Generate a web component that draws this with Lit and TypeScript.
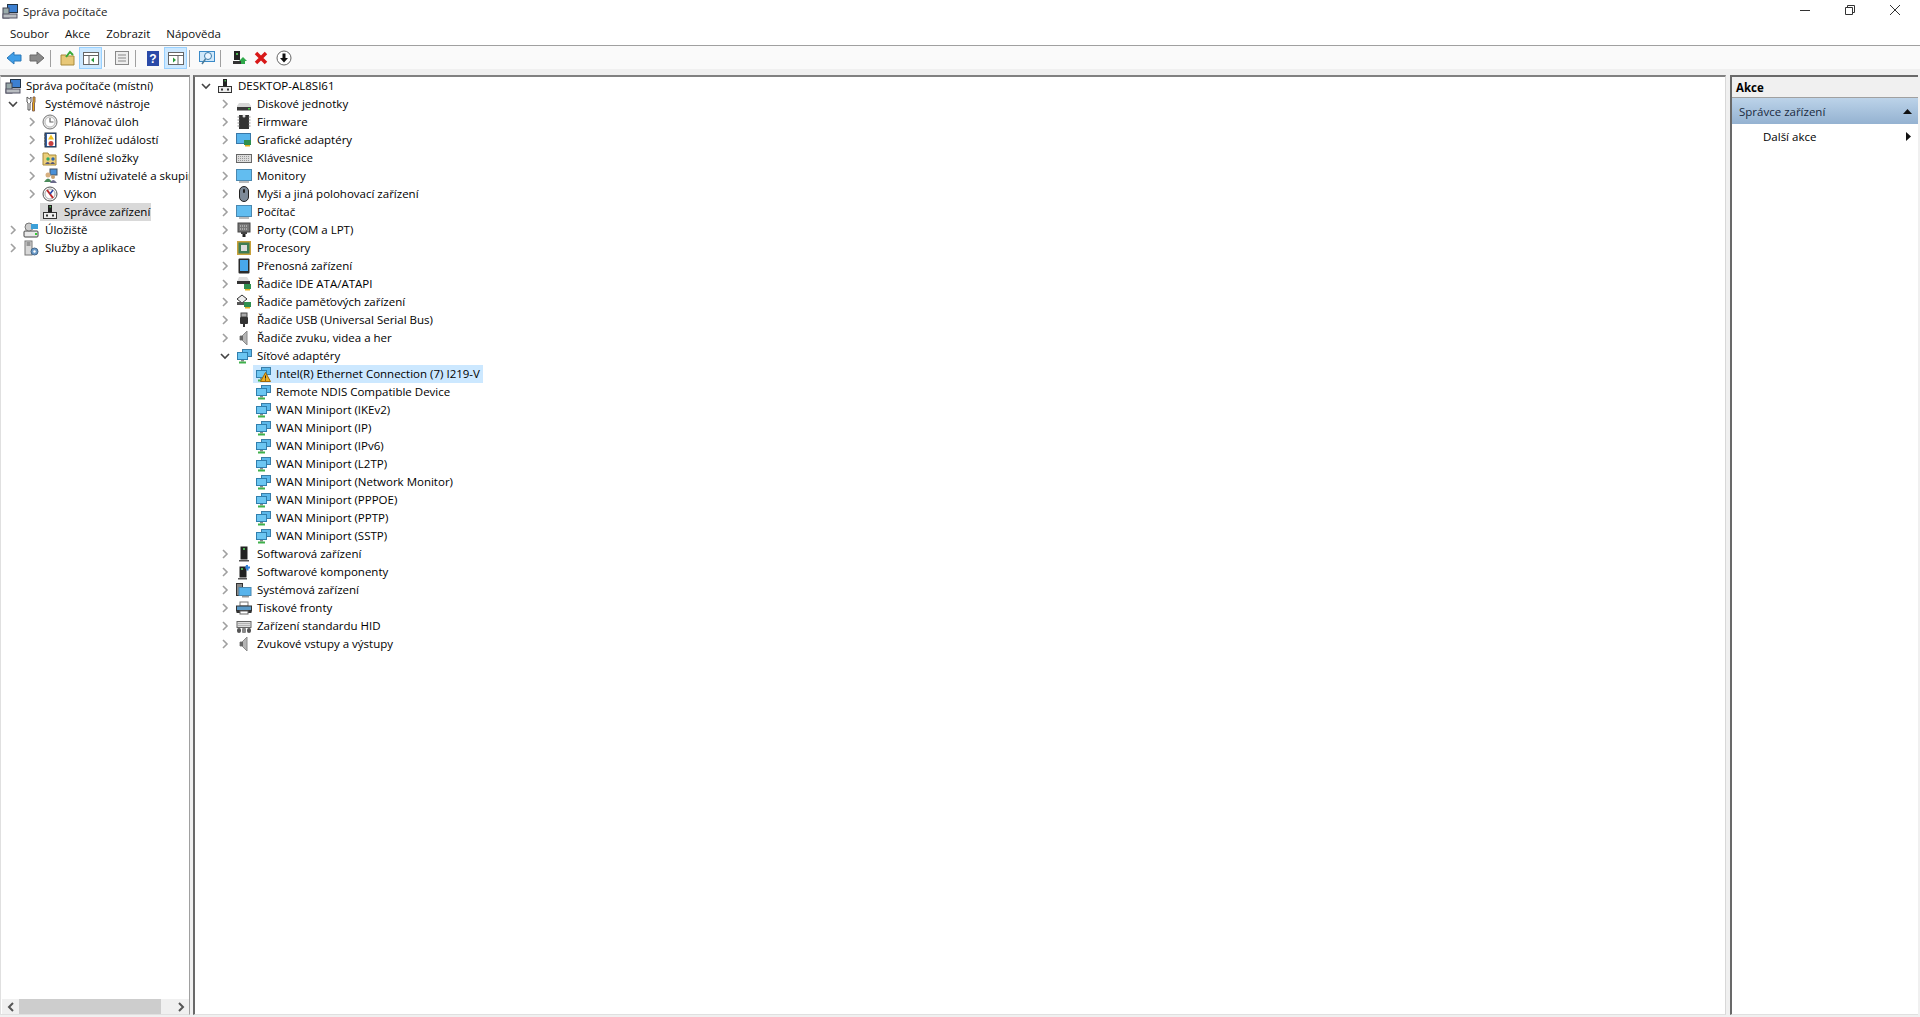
import { LitElement, html, css, svg } from "lit";
import { customElement } from "lit/decorators.js";

const net = svg`<rect x="6.500" y="1.500" width="9" height="7" fill="#5cb8ea" stroke="#3a7ea8"/><rect x="1.500" y="4.500" width="10" height="7" fill="#6cc6f2" stroke="#2f7fae"/><rect x="5" y="12" width="3" height="1.500" fill="#888"/><path d="M3 14.500h7" stroke="#3fb04a" stroke-width="2"/>`;
const comp = svg`<rect x="6" y="1" width="4" height="7" fill="#222"/><rect x="7.500" y="2" width="1.500" height="1.500" fill="#4caf50"/><rect x="1.500" y="8.500" width="13" height="6" fill="#eee" stroke="#333"/><rect x="4" y="10.500" width="2" height="2" fill="#333"/><rect x="10" y="10.500" width="2" height="2" fill="#333"/>`;
const chip = svg`<rect x="1" y="1" width="14" height="14" fill="#c8a23c"/><rect x="2.500" y="2.500" width="11" height="11" fill="#3f7d55"/><rect x="5" y="5" width="6" height="6" fill="#ddd"/>`;
const card = svg`<rect x="8" y="8" width="7" height="5" fill="#2f8f4e"/><rect x="9" y="13" width="5" height="1.500" fill="#e0b020"/>`;
const speaker = svg`<path d="M4 6h2l5-5v14l-5-5H4z" fill="#b4b4b4" stroke="#8a8a8a"/><rect x="4" y="6" width="3" height="4" fill="#666"/>`;

const icons: Record<string, unknown> = {
  mgmt: svg`<rect x="5.500" y="1.500" width="10" height="8" fill="#3c7fd0" stroke="#234"/><rect x="1" y="5" width="6" height="10" fill="#9aa" stroke="#445"/><rect x="1" y="11" width="14" height="4" fill="#b8bcc0" stroke="#556"/>`,
  tools: svg`<path d="M4 1v5l1 1v7h2V7l1-1V1L6.500 3z" fill="#fff" stroke="#555"/><path d="M10 1h2v5l-.500 1v8h-2V7L10 6z" fill="#e8a810" stroke="#865"/>`,
  clock: svg`<circle cx="8" cy="8" r="7" fill="#e8e8e8" stroke="#777"/><circle cx="8" cy="8" r="5" fill="#fff" stroke="#bbb"/><path d="M8 4v4h3.500" fill="none" stroke="#666" stroke-width="1.200"/>`,
  log: svg`<rect x="3" y="1" width="11" height="14" fill="#2f5fa8" stroke="#234"/><rect x="5" y="2" width="8" height="12" fill="#fff"/><path d="M9 2.500l3 5H6z" fill="#f0c020"/><circle cx="9" cy="11.500" r="2.500" fill="#c84040"/><path d="M2 3h2M2 6h2M2 9h2M2 12h2" stroke="#555"/>`,
  share: svg`<path d="M1 3h5l1 2h7v10H1z" fill="#eccf7a" stroke="#a88a3a"/><circle cx="6" cy="9" r="1.700" fill="#3a6"/><circle cx="11" cy="9" r="1.700" fill="#36a"/><path d="M3 14q3-4 5 0M8 14q3-4 5 0" fill="#557"/>`,
  users: svg`<rect x="8" y="1" width="7" height="6" fill="#4a90d8" stroke="#456"/><circle cx="6" cy="7" r="2.500" fill="#d8b080"/><path d="M2 14q4-7 8 0z" fill="#4a8a5a"/><circle cx="11" cy="9" r="2" fill="#c8a070"/><path d="M8 15q3-6 7 0z" fill="#6a6a8a"/>`,
  perf: svg`<circle cx="8" cy="8" r="7" fill="#f4f4f4" stroke="#555"/><circle cx="8" cy="8" r="5" fill="#fff" stroke="#aaa"/><path d="M5 4l6 8" stroke="#c02828" stroke-width="2"/><path d="M11 4l-3 4" stroke="#2848a8" stroke-width="1.500"/>`,
  storage: svg`<rect x="1" y="9" width="14" height="6" rx="1" fill="#e8e8e8" stroke="#444"/><rect x="12" y="11" width="2" height="2" fill="#3c3"/><circle cx="6" cy="5" r="4" fill="#ccc" stroke="#777"/><rect x="8" y="2" width="7" height="5" fill="#3da0d8"/>`,
  svc: svg`<rect x="2" y="1" width="7" height="14" fill="#d8d8d8" stroke="#777"/><path d="M3.500 3h4M3.500 5h4" stroke="#555"/><circle cx="11.500" cy="11.500" r="3.500" fill="#6a9ac8" stroke="#468"/><circle cx="11.500" cy="11.500" r="1.200" fill="#fff"/>`,
  comp,
  disk: svg`<path d="M3 7h10l2 3v4H1v-4z" fill="#d8d8d8"/><rect x="1" y="11" width="14" height="3.500" fill="#3a3a3a"/><rect x="12" y="12" width="2" height="1.500" fill="#4c4"/>`,
  fw: svg`<rect x="3" y="1" width="10" height="14" fill="#333"/><path d="M1.500 3h2M1.500 6h2M1.500 9h2M1.500 12h2M12.500 3h2M12.500 6h2M12.500 9h2M12.500 12h2" stroke="#888"/><circle cx="8" cy="2" r="1.500" fill="#ddd"/>`,
  gpu: svg`<rect x="0.500" y="1.500" width="14" height="10" fill="#58b4ec" stroke="#3978a8"/>${card}`,
  kbd: svg`<rect x="0.500" y="4.500" width="15" height="8" fill="#ddd" stroke="#666"/><path d="M2 6.500h12M2 8.500h12M2 10.500h12" stroke="#999" stroke-dasharray="1 1"/>`,
  mon: svg`<rect x="0.500" y="1.500" width="15" height="11" fill="#62bdf0" stroke="#4a88b0"/><rect x="3" y="13" width="10" height="2" fill="#bbb"/>`,
  mouse: svg`<rect x="3.500" y="0.500" width="9" height="15" rx="4.500" fill="#7d8a98" stroke="#222"/><rect x="7" y="3" width="2" height="4" rx="1" fill="#222"/>`,
  port: svg`<rect x="2" y="1" width="12" height="9" fill="#777" stroke="#444"/><path d="M4 4h8M4 7h8" stroke="#ddd" stroke-dasharray="1 1"/><rect x="5" y="10" width="6" height="2" fill="#444"/><rect x="6.500" y="12" width="3" height="3" fill="#222"/>`,
  cpu: chip,
  tablet: svg`<rect x="2.500" y="0.500" width="11" height="15" rx="1" fill="#2a2a2a"/><rect x="4" y="2" width="8" height="11" fill="#48a8ec"/>`,
  ide: svg`<path d="M3 1h8l3 5H1z" fill="#ddd"/><rect x="1" y="5" width="13" height="3" fill="#333"/>${card}`,
  mem: svg`<path d="M6 1l5 4-5 4-5-4z" fill="#eee" stroke="#333"/><rect x="1" y="8" width="7" height="3" fill="#555"/>${card}`,
  usb: svg`<rect x="5" y="1" width="6" height="4" fill="#aaa" stroke="#444"/><rect x="4" y="5" width="8" height="7" rx="1" fill="#333"/><rect x="7" y="12" width="2" height="3" fill="#333"/>`,
  sound: speaker,
  net,
  warn: svg`${net}<path d="M10.500 6.500l5 9h-10z" fill="#f0b020" stroke="#a06808"/><path d="M10.500 9.500v3M10.500 13.500v1" stroke="#222"/>`,
  soft: svg`<rect x="4.500" y="0.500" width="7" height="13" fill="#222"/><rect x="7" y="2" width="2" height="2" fill="#4caf50"/><rect x="3" y="14" width="10" height="1.500" fill="#555"/>`,
  softc: svg`<rect x="3.500" y="2.500" width="7" height="11" fill="#222"/><rect x="5" y="4" width="2" height="2" fill="#4caf50"/><rect x="2" y="14" width="9" height="1.500" fill="#555"/><path d="M10 1h2v1.500h2v2h-1.500v2h-2v-2H9z" fill="#2f80d8"/>`,
  sys: svg`<rect x="0.500" y="1.500" width="6" height="12" fill="#888" stroke="#333"/><rect x="3" y="5.500" width="12" height="8" fill="#58b4ec" stroke="#4a88b0"/><rect x="6" y="14" width="7" height="1.500" fill="#999"/>`,
  print: svg`<rect x="4" y="2" width="8" height="4" fill="#fff" stroke="#777"/><rect x="0.500" y="6" width="15" height="5" fill="#5a9ac8" stroke="#333"/><rect x="0.500" y="10" width="15" height="3" fill="#333"/><rect x="4" y="11" width="8" height="3" fill="#fff" stroke="#666"/>`,
  hid: svg`<rect x="1" y="3.500" width="14" height="6" fill="#ddd" stroke="#666"/><path d="M2.500 5.500h11M2.500 7.500h11" stroke="#888" stroke-dasharray="1 1"/><rect x="1" y="10" width="4" height="5" rx="2" fill="#555"/><rect x="11" y="10" width="4" height="5" rx="2" fill="#555"/><rect x="6" y="10" width="4" height="5" rx="1" fill="#888"/>`,
};

type Row = { t: string; i: string; lvl: number; tw?: "o" | "c"; sel?: "grey" | "blue" };

const leftRows: Row[] = [
  { t: "Správa počítače (místní)", i: "mgmt", lvl: 0 },
  { t: "Systémové nástroje", i: "tools", lvl: 1, tw: "o" },
  { t: "Plánovač úloh", i: "clock", lvl: 2, tw: "c" },
  { t: "Prohlížeč událostí", i: "log", lvl: 2, tw: "c" },
  { t: "Sdílené složky", i: "share", lvl: 2, tw: "c" },
  { t: "Místní uživatelé a skupiny", i: "users", lvl: 2, tw: "c" },
  { t: "Výkon", i: "perf", lvl: 2, tw: "c" },
  { t: "Správce zařízení", i: "comp", lvl: 2, sel: "grey" },
  { t: "Úložiště", i: "storage", lvl: 1, tw: "c" },
  { t: "Služby a aplikace", i: "svc", lvl: 1, tw: "c" },
];

const c = (t: string, i: string): Row => ({ t, i, lvl: 1, tw: "c" });
const w = (t: string): Row => ({ t, i: "net", lvl: 2 });
const mainRows: Row[] = [
  { t: "DESKTOP-AL8SI61", i: "comp", lvl: 0, tw: "o" },
  c("Diskové jednotky", "disk"),
  c("Firmware", "fw"),
  c("Grafické adaptéry", "gpu"),
  c("Klávesnice", "kbd"),
  c("Monitory", "mon"),
  c("Myši a jiná polohovací zařízení", "mouse"),
  c("Počítač", "mon"),
  c("Porty (COM a LPT)", "port"),
  c("Procesory", "cpu"),
  c("Přenosná zařízení", "tablet"),
  c("Řadiče IDE ATA/ATAPI", "ide"),
  c("Řadiče paměťových zařízení", "mem"),
  c("Řadiče USB (Universal Serial Bus)", "usb"),
  c("Řadiče zvuku, videa a her", "sound"),
  { t: "Síťové adaptéry", i: "net", lvl: 1, tw: "o" },
  { t: "Intel(R) Ethernet Connection (7) I219-V", i: "warn", lvl: 2, sel: "blue" },
  w("Remote NDIS Compatible Device"),
  w("WAN Miniport (IKEv2)"),
  w("WAN Miniport (IP)"),
  w("WAN Miniport (IPv6)"),
  w("WAN Miniport (L2TP)"),
  w("WAN Miniport (Network Monitor)"),
  w("WAN Miniport (PPPOE)"),
  w("WAN Miniport (PPTP)"),
  w("WAN Miniport (SSTP)"),
  c("Softwarová zařízení", "soft"),
  c("Softwarové komponenty", "softc"),
  c("Systémová zařízení", "sys"),
  c("Tiskové fronty", "print"),
  c("Zařízení standardu HID", "hid"),
  c("Zvukové vstupy a výstupy", "sound"),
];

const ico = (n: string) => html`<svg class="ico" viewBox="0 0 16 16" width="16" height="16">${icons[n]}</svg>`;

const twisty = (k?: "o" | "c") =>
  html`<svg class="tw" viewBox="0 0 10 10" width="10" height="10">
    ${k === "o"
      ? svg`<path d="M1 3l4 4 4-4" fill="none" stroke="#444" stroke-width="1.600"/>`
      : k === "c"
      ? svg`<path d="M3 1l4 4-4 4" fill="none" stroke="#a0a0a0" stroke-width="1.600"/>`
      : ""}
  </svg>`;

@customElement("app-root")
export class AppRoot extends LitElement {
  static styles = css`
    :host {
      display: flex;
      flex-direction: column;
      width: 1920px;
      height: 1017px;
      overflow: hidden;
      background: #fff;
      font-family: "Open Sans", "Noto Sans", sans-serif;
      font-size: 11.5px;
      color: #000;
    }
    .title {
      height: 24px;
      box-sizing: border-box;
      display: flex;
      align-items: center;
      padding: 0 0 2px 2px;
      gap: 5px;
      flex: none;
    }
    .title-text { flex: 1; color: #222; }
    .winbtns { display: flex; align-items: center; align-self: flex-start; padding: 1px 3px 0 0; }
    .winbtns button {
      width: 45px; height: 18px; padding: 0; border: 0; background: none;
      display: flex; align-items: center; justify-content: center;
    }
    .menu {
      height: 22px; flex: none; display: flex; align-items: center; box-sizing: border-box;
      padding: 0 0 3px 10px; gap: 16px; color: #111;
      border-bottom: 1px solid #a0a0a0;
    }
    .toolbar {
      height: 23px; flex: none; display: flex; align-items: center; box-sizing: border-box;
      padding: 1px 0 0 2px;
      background: #fafafa;
    }
    .tb { width: 23px; height: 22px; display: flex; align-items: center; justify-content: center; }
    .tb.n { width: 22px; }
    .tb.on { background: #cce8ff; box-shadow: inset 0 0 0 1px #99d1ff; }
    .sep { width: 1px; height: 17px; background: #a0a0a0; margin: 0 5px 0 2px; }
    .sep.wide { margin-right: 7px; }
    .tb-gap { height: 6px; flex: none; background: #f0f0f0; }
    .panes {
      flex: 1; min-height: 0; display: flex; background: #f0f0f0; gap: 3px; padding-bottom: 2px;
    }
    .pane {
      background: #fff; border: 1px solid #a0a0a0; border-top: 2px solid #808080;
      border-bottom-color: #e0e0e0; position: relative; overflow: hidden;
    }
    .left { width: 188px; flex: none; border-left-color: #e0e0e0; }
    .center { flex: 1; min-width: 0; border-left: 2px solid #696969; border-right-color: #d8d8d8; }
    .center .tw { margin-right: 4px; }
    .right {
      width: 186px; flex: none; border-left: 2px solid #696969; margin-left: 1px; margin-right: 2px;
      border-top-color: #696969; border-right: 0;
    }
    .row { height: 18px; display: flex; align-items: center; white-space: nowrap; }
    .tw { flex: none; margin-right: 3px; }
    .ico { flex: none; }
    .lab { margin-left: 3px; padding: 0 3px 0 2px; height: 18px; line-height: 18px; }
    .left .lab { padding-right: 1px; }
    .left .l1 .lab, .left .l2 .lab { margin-left: 4px; }
    .r-ic { display: flex; align-items: center; height: 18px; padding-left: 2px; }
    .r-sel { display: flex; align-items: center; height: 18px; }
    .r-sel.grey { background: #d9d9d9; }
    .r-sel.blue { background: #cce8ff; }
    .left .l0 { padding-left: 2px; }
    .left .l1 { padding-left: 7px; }
    .left .l2 { padding-left: 26px; }
    .center .l0 { padding-left: 6px; }
    .center .l1 { padding-left: 25px; }
    .center .l2 { padding-left: 44px; }
    .hbar {
      position: absolute; left: 1px; right: 0; bottom: 0; height: 15px;
      background: #f0f0f0; display: flex; align-items: center;
    }
    .hbar .arrow { width: 17px; display: flex; justify-content: center; }
    .hbar .thumb { width: 142px; height: 15px; background: #cdcdcd; }
    .hbar .fill { flex: 1; }
    .act-head {
      height: 21px; line-height: 21px; padding-left: 4px; font-weight: 700; background: #f0f0f0;
      border-bottom: 1px solid #a0a0a0; box-sizing: border-box;
    }
    .act-sub {
      height: 26px; display: flex; align-items: center; justify-content: space-between;
      padding: 0 6px 0 7px; background: linear-gradient(#bcd3e9, #94b2d1); color: #1a2a40;
    }
    .act-item {
      height: 24px; display: flex; align-items: center; justify-content: space-between;
      padding: 0 7px 0 31px;
    }
  `;

  private tree(rows: Row[], withTw: boolean) {
    return html`<div class="tree">
      ${rows.map(
        (r) => html`<div class="row l${r.lvl}">
          ${r.lvl === 0 && !withTw ? "" : twisty(r.tw)}
          <span class="r-sel ${r.sel ?? ""}"><span class="r-ic">${ico(r.i)}</span><span class="lab">${r.t}</span></span>
        </div>`
      )}
    </div>`;
  }

  render() {
    return html`
      <div class="title">
        <svg viewBox="0 0 16 16" width="16" height="16">${icons.mgmt}</svg>
        <span class="title-text">Správa počítače</span>
        <div class="winbtns">
          <button><svg width="10" height="10"><path d="M0 5.500h10" stroke="#333"/></svg></button>
          <button><svg width="10" height="10"><path d="M.500 2.500h7v7h-7zM2.500 2V.500h7v7H8" fill="none" stroke="#333"/></svg></button>
          <button><svg width="10" height="10"><path d="M0 0l10 10M10 0L0 10" stroke="#333"/></svg></button>
        </div>
      </div>
      <div class="menu"><span>Soubor</span><span>Akce</span><span>Zobrazit</span><span>Nápověda</span></div>
      <div class="toolbar">
        <div class="tb"><svg viewBox="0 0 16 16" width="16" height="16"><path d="M1 8l7-6v3h7v6H8v3z" fill="#3f9ee8" stroke="#2a78b8"/></svg></div>
        <div class="tb"><svg viewBox="0 0 16 16" width="16" height="16"><path d="M15 8L8 2v3H1v6h7v3z" fill="#8a8a8a" stroke="#6a6a6a"/></svg></div>
        <div class="sep"></div>
        <div class="tb"><svg viewBox="0 0 16 16" width="16" height="16"><path d="M1 5h5l1 1h7v9H1z" fill="#e8c878" stroke="#a88a3a"/><path d="M6 7l4-5 3 3" fill="none" stroke="#38a838" stroke-width="2"/></svg></div>
        <div class="tb on"><svg viewBox="0 0 16 16" width="16" height="16"><rect x=".5" y="2.500" width="15" height="12" fill="#fff" stroke="#666"/><path d="M1 5.500h14M6 5.500v9" stroke="#666"/><path d="M11 7.500v5L8 10z" fill="#2a9a3a"/></svg></div>
        <div class="sep"></div>
        <div class="tb"><svg viewBox="0 0 16 16" width="16" height="16"><rect x="1.500" y="1.500" width="13" height="13" fill="#eee" stroke="#888"/><path d="M4 5h8M4 8h8M4 11h8" stroke="#888"/></svg></div>
        <div class="sep"></div>
        <div class="tb"><svg viewBox="0 0 16 16" width="16" height="16"><rect x="2" y="1" width="12" height="15" fill="#2a4aa8"/><text x="8" y="13" text-anchor="middle" font-size="12" font-weight="700" fill="#fff" font-family="Liberation Sans">?</text></svg></div>
        <div class="tb on"><svg viewBox="0 0 16 16" width="16" height="16"><rect x=".5" y="2.500" width="15" height="12" fill="#fff" stroke="#666"/><path d="M1 5.500h14M10 5.500v9" stroke="#666"/><path d="M5 7.500v5L8 10z" fill="#2a9a3a"/></svg></div>
        <div class="sep"></div>
        <div class="tb"><svg viewBox="0 0 16 16" width="16" height="16"><rect x=".5" y="1.500" width="15" height="10" fill="#cfe8fa" stroke="#3a8ac8"/><circle cx="9" cy="6" r="3.500" fill="#eaf5ff" stroke="#3a7aa8"/><path d="M6.500 9L3 14" stroke="#4a7a98" stroke-width="1.500"/></svg></div>
        <div class="sep wide"></div>
        <div class="tb n"><svg viewBox="0 0 16 16" width="16" height="16"><rect x="3" y="1" width="6" height="9" fill="#222"/><rect x="5" y="3" width="2" height="2" fill="#4caf50"/><rect x="2" y="11" width="8" height="3" fill="#333"/><path d="M12 7l4 4h-2v3h-4v-3H8z" fill="#2fa84a"/></svg></div>
        <div class="tb n"><svg viewBox="0 0 16 16" width="16" height="16"><path d="M3 3l10 10M13 3L3 13" stroke="#d81818" stroke-width="3.500"/></svg></div>
        <div class="tb"><svg viewBox="0 0 16 16" width="16" height="16"><circle cx="8" cy="8" r="7" fill="#fff" stroke="#666"/><path d="M6.500 3.500h3V8H12l-4 4.500L4 8h2.500z" fill="#111"/></svg></div>
      </div>
      <div class="tb-gap"></div>
      <div class="panes">
        <div class="pane left">
          ${this.tree(leftRows, false)}
          <div class="hbar">
            <div class="arrow"><svg width="10" height="10"><path d="M7 1L3 5l4 4" fill="none" stroke="#555" stroke-width="2"/></svg></div>
            <div class="thumb"></div>
            <div class="fill"></div>
            <div class="arrow"><svg width="10" height="10"><path d="M3 1l4 4-4 4" fill="none" stroke="#555" stroke-width="2"/></svg></div>
          </div>
        </div>
        <div class="pane center">${this.tree(mainRows, true)}</div>
        <div class="pane right">
          <div class="act-head">Akce</div>
          <div class="act-sub"><span>Správce zařízení</span><svg width="9" height="5"><path d="M0 5l4.500-5L9 5z" fill="#111"/></svg></div>
          <div class="act-item"><span>Další akce</span><svg width="5" height="9"><path d="M0 0l5 4.500L0 9z" fill="#111"/></svg></div>
        </div>
      </div>
    `;
  }
}
